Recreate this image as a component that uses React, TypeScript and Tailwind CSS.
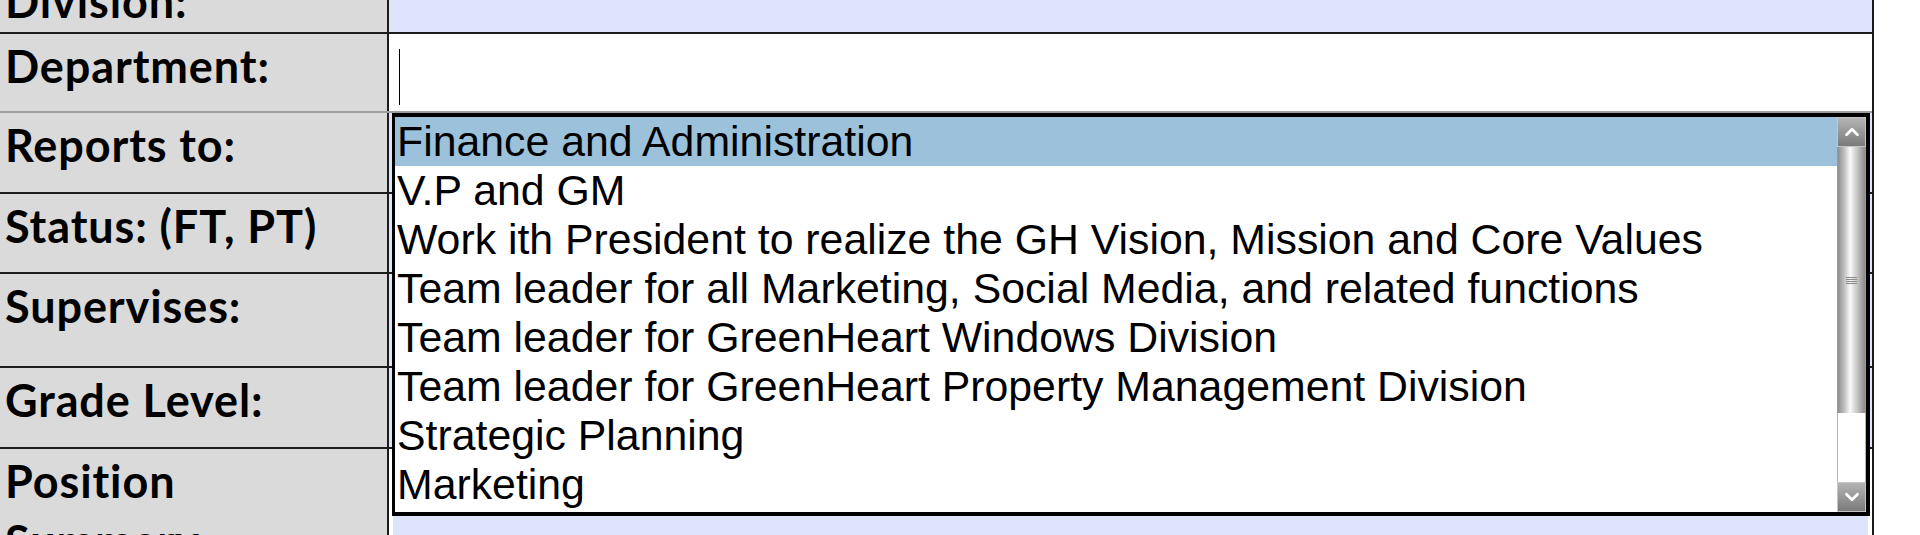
import { ChevronUp, ChevronDown } from "lucide-react";

const labelFont = { fontFamily: "Lato, 'Open Sans', sans-serif" };
const listFont = { fontFamily: "'Liberation Sans', Arial, sans-serif" };

const options = [
  "Finance and Administration",
  "V.P and GM",
  "Work ith President to realize the GH Vision, Mission and Core Values",
  "Team leader for all Marketing, Social Media, and related functions",
  "Team leader for GreenHeart Windows Division",
  "Team leader for GreenHeart Property Management Division",
  "Strategic Planning",
  "Marketing",
];

function Label({ children }: { children: React.ReactNode }) {
  return (
    <div
      style={labelFont}
      className="w-[389px] shrink-0 bg-[#dadada] border-r-2 border-[#1c1c1c] pl-[5px] pt-[2px] text-[45px] leading-[60px] tracking-[0.9px] font-bold text-black"
    >
      {children}
    </div>
  );
}

function Row({
  h,
  label,
  children,
  line = "border-[#1c1c1c]",
}: {
  h: string;
  label: React.ReactNode;
  children?: React.ReactNode;
  line?: string;
}) {
  return (
    <div className={`flex border-b-2 ${line} ${h}`}>
      <Label>{label}</Label>
      <div className="flex-1 flex">{children}</div>
    </div>
  );
}

function Scrollbar() {
  return (
    <div className="w-[29px] shrink-0 flex flex-col">
      <div className="h-[30px] border border-[#c4c4c4] bg-[linear-gradient(to_bottom,#b4b4b4,#7a7a7a)] flex items-center justify-center">
        <ChevronUp size={22} strokeWidth={3} color="#ffffff" />
      </div>
      <div className="h-[266px] border-x border-[#9a9a9a] bg-[linear-gradient(to_right,#8e8e8e,#c4c4c4_25%,#fafafa_45%,#c8c8c8_70%,#8a8a8a)] flex items-center justify-center">
        <div className="flex flex-col gap-[1px] w-[11px]">
          <div className="h-[1px] bg-[#8c8c8c]" />
          <div className="h-[1px] bg-[#8c8c8c]" />
          <div className="h-[1px] bg-[#8c8c8c]" />
          <div className="h-[1px] bg-[#8c8c8c]" />
        </div>
      </div>
      <div className="h-[69px] border-x border-[#b4b4b4] bg-white" />
      <div className="h-[30px] border border-[#c4c4c4] bg-[linear-gradient(to_bottom,#b4b4b4,#7a7a7a)] flex items-center justify-center">
        <ChevronDown size={22} strokeWidth={3} color="#ffffff" />
      </div>
    </div>
  );
}

export default function App() {
  return (
    <div className="h-[535px] w-[1920px] overflow-hidden bg-white">
      <div className="relative w-[1874px] -mt-[31px] border-r-2 border-[#1c1c1c]">
        <Row h="h-[65px]" label="Division:">
          <div className="flex-1 bg-[#dde4fc]" />
        </Row>
        <Row h="h-[79px]" label="Department:" line="border-[#9e9e9e]">
          <div className="flex-1 bg-white pl-[10px] pt-[15px]">
            <div className="w-[1px] h-[56px] bg-black" />
          </div>
        </Row>
        <Row h="h-[81px]" label="Reports to:">
          <div className="flex-1 bg-[#dde4fc]" />
        </Row>
        <Row h="h-[80px]" label="Status: (FT, PT)">
          <div className="flex-1 bg-[#dde4fc]" />
        </Row>
        <Row h="h-[94px]" label="Supervises:">
          <div className="flex-1 bg-[#dde4fc]" />
        </Row>
        <Row h="h-[81px]" label="Grade Level:">
          <div className="flex-1 bg-[#dde4fc]" />
        </Row>
        <Row
          h="h-[160px]"
          label={
            <>
              Position
              <br />
              Summary:
            </>
          }
        >
          <div className="flex-1 bg-white px-[4px]">
            <div className="h-full bg-[#dde4fc]" />
          </div>
        </Row>

        <div
          style={listFont}
          className="absolute left-[392px] top-[144px] w-[1478px] h-[403px] bg-white border-[4px] border-l-[3px] border-black flex"
        >
          <div className="flex-1 flex flex-col">
            {options.map((o, i) => (
              <div
                key={o}
                className={`h-[49px] pl-[2px] text-[42.8px] leading-[49px] text-black whitespace-nowrap ${
                  i === 0 ? "bg-[#9bc2da]" : ""
                }`}
              >
                {o}
              </div>
            ))}
          </div>
          <Scrollbar />
        </div>
      </div>
    </div>
  );
}
